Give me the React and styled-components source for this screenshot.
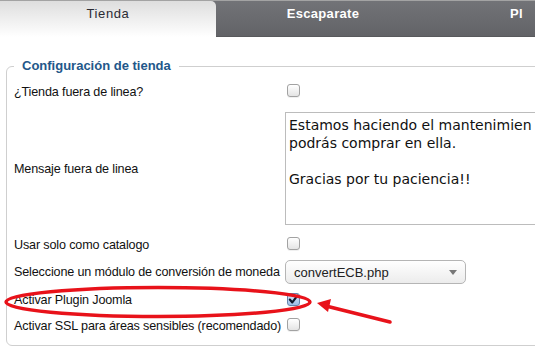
import React from 'react';
import styled, { createGlobalStyle } from 'styled-components';

const GlobalStyle = createGlobalStyle`
  html, body {
    margin: 0;
    padding: 0;
    background: #fff;
    overflow: hidden;
  }
  body {
    font-family: 'Liberation Sans', Arial, sans-serif;
    font-size: 12.6px;
    letter-spacing: -0.15px;
    color: #111;
  }
`;

const Page = styled.div`
  position: relative;
  width: 535px;
  height: 355px;
  overflow: hidden;
`;

const TabBar = styled.div`
  display: flex;
  height: 37px;
  border-top: 1px solid #a3a3a3;
  box-sizing: border-box;
  background: linear-gradient(#727377, #626367);
  border-bottom: 1px solid #58595c;
`;

const Tab = styled.div`
  flex: 0 0 ${(p) => p.width}px;
  box-sizing: border-box;
  padding: 5px 0 0 ${(p) => p.indent || 0}px;
  text-align: ${(p) => (p.indent ? 'left' : 'center')};
  white-space: nowrap;
  font-size: 13px;
  font-weight: ${(p) => (p.active ? 'normal' : 'bold')};
  letter-spacing: ${(p) => (p.active ? '0.6px' : '0.3px')};
  color: ${(p) => (p.active ? '#2b2b33' : '#fff')};
  background: ${(p) => (p.active ? 'linear-gradient(#dedede, #ffffff)' : 'transparent')};
  border-top-right-radius: ${(p) => (p.active ? '5px' : '0')};
  margin-bottom: ${(p) => (p.active ? '-1px' : '0')};
`;

const Content = styled.div`
  padding: 21px 0 0 6px;
`;

const Fieldset = styled.fieldset`
  margin: 0;
  width: 620px;
  box-sizing: border-box;
  border: 1px solid #cfcfcf;
  border-radius: 6px;
  padding: 5px 0 7px 7px;
`;

const Legend = styled.legend`
  padding: 0 8px;
  font-size: 13px;
  line-height: 16px;
  letter-spacing: 0;
  font-weight: bold;
  color: #23578a;
`;

const Row = styled.div`
  display: grid;
  grid-template-columns: 271px 1fr;
  align-items: center;
  height: ${(p) => p.h}px;
`;

const Label = styled.div`
  white-space: nowrap;
`;

const Check = styled.span`
  display: inline-flex;
  align-items: center;
  justify-content: center;
  margin-left: 2px;
  width: 13px;
  height: 13px;
  box-sizing: border-box;
  border-radius: 3px;
  border: 1px solid ${(p) => (p.checked ? '#6484ad' : '#a2a2a2')};
  background: ${(p) =>
    p.checked
      ? 'linear-gradient(#d9e7f9, #9dbde6)'
      : 'linear-gradient(#ffffff, #e4e4e4)'};
  box-shadow: 0 1px 0 rgba(0, 0, 0, 0.06);
`;

const TextArea = styled.div`
  height: 113px;
  box-sizing: border-box;
  border: 1px solid #bcbcbc;
  padding: 3px 3px;
  font-family: 'DejaVu Sans', Verdana, sans-serif;
  font-size: 14px;
  letter-spacing: 0;
  line-height: 18px;
  color: #111;
  white-space: pre;
  overflow: hidden;
`;

const Select = styled.div`
  display: flex;
  align-items: center;
  justify-content: space-between;
  width: 181px;
  height: 24px;
  box-sizing: border-box;
  padding: 0 8px 0 8px;
  border: 1px solid #b5b5b5;
  border-radius: 5px;
  background: linear-gradient(#ffffff, #ececec);
  font-size: 13px;
  letter-spacing: 0;
  color: #222;
`;

const Caret = styled.span`
  width: 0;
  height: 0;
  border-left: 4px solid transparent;
  border-right: 4px solid transparent;
  border-top: 5px solid #777;
`;

const Annotation = styled.svg`
  position: absolute;
  left: 0;
  top: 0;
  pointer-events: none;
`;

const Checkbox = ({ checked }) => (
  <Check checked={checked}>
    {checked && (
      <svg width="11" height="11" viewBox="0 0 11 11">
        <path d="M1.8 5.6 L4.3 8.4 L9.4 1.6" fill="none" stroke="#111a2c" strokeWidth="2.2" strokeLinecap="round" strokeLinejoin="round" />
      </svg>
    )}
  </Check>
);

const message = 'Estamos haciendo el mantenimien\npodrás comprar en ella.\n\nGracias por tu paciencia!!';

export default function App() {
  return (
    <Page>
      <GlobalStyle />
      <TabBar>
        <Tab active width={216}>Tienda</Tab>
        <Tab width={214}>Escaparate</Tab>
        <Tab width={105} indent={80}>Pl</Tab>
      </TabBar>
      <Content>
        <Fieldset>
          <Legend>Configuración de tienda</Legend>
          <Row h={26}>
            <Label>¿Tienda fuera de linea?</Label>
            <div><Checkbox /></div>
          </Row>
          <Row h={127}>
            <Label>Mensaje fuera de linea</Label>
            <TextArea>{message}</TextArea>
          </Row>
          <Row h={26}>
            <Label>Usar solo como catalogo</Label>
            <div><Checkbox /></div>
          </Row>
          <Row h={28}>
            <Label>Seleccione un módulo de conversión de moneda</Label>
            <Select>
              <span>convertECB.php</span>
              <Caret />
            </Select>
          </Row>
          <Row h={28}>
            <Label>Activar Plugin Joomla</Label>
            <div><Checkbox checked /></div>
          </Row>
          <Row h={24}>
            <Label>Activar SSL para áreas sensibles (recomendado)</Label>
            <div><Checkbox /></div>
          </Row>
        </Fieldset>
      </Content>
      <Annotation width="535" height="355">
        <ellipse cx="158" cy="302" rx="152" ry="14.5" fill="none" stroke="#e8121a" strokeWidth="3.5" />
        <line x1="390" y1="322" x2="326" y2="306" stroke="#e8121a" strokeWidth="3.5" strokeLinecap="round" />
        <polygon points="317,303 331,299 328,312" fill="#e8121a" />
      </Annotation>
    </Page>
  );
}
